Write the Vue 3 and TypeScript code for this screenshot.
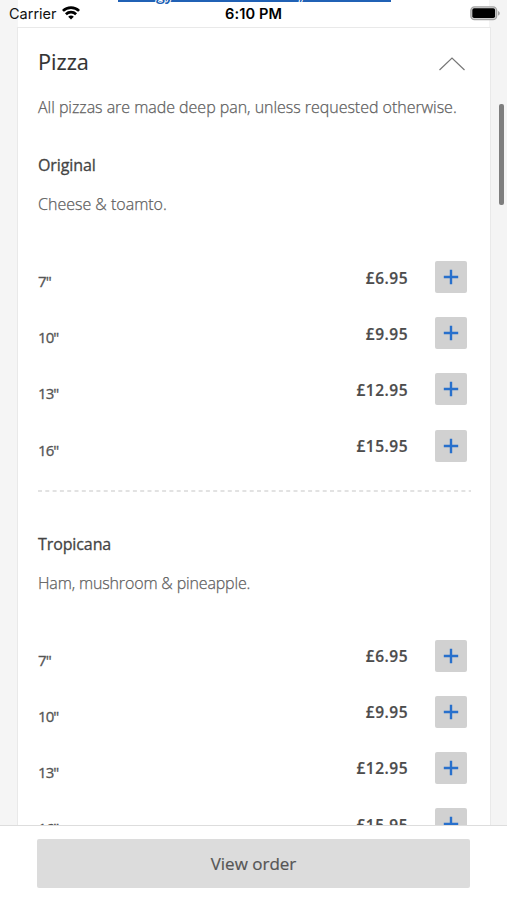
<script setup lang="ts">
interface Option { size: string; price: string }
interface Item { name: string; description: string; options: Option[] }

const options: Option[] = [
  { size: '7"', price: '£6.95' },
  { size: '10"', price: '£9.95' },
  { size: '13"', price: '£12.95' },
  { size: '16"', price: '£15.95' },
]
const items: Item[] = [
  { name: 'Original', description: 'Cheese & toamto.', options },
  { name: 'Tropicana', description: 'Ham, mushroom & pineapple.', options },
]
</script>

<template>
  <div class="screen">
    <div class="link-strip"><span class="link-text">gy</span><span class="link-text comma">,</span></div>
    <header class="status">
      <div class="carrier">
        <span>Carrier</span>
        <svg class="wifi" width="18" height="14" viewBox="0 0 18 14" fill="none" stroke="#000" stroke-width="2.7">
          <path d="M.9 4.9C5.4.4 12.6.4 17.1 4.9" />
          <path d="M3.9 8.3c2.900-2.800 7.300-2.800 10.200 0" />
          <path d="M6.200 10.800c1.600-1.600 4-1.600 5.600 0L9 13.600z" fill="#000" stroke="none" />
        </svg>
      </div>
      <span class="clock">6:10 PM</span>
      <svg class="battery" width="31" height="15" viewBox="0 0 31 15">
        <rect x=".9" y=".9" width="25.7" height="12.6" rx="3.6" fill="#ddd" stroke="#a3a3a3" stroke-width="1.4" />
        <rect x="2.3" y="2.3" width="22.800" height="9.800" rx="1.8" fill="#000" />
        <path d="M28 4.900c2.400.9 2.400 3.800 0 4.700z" fill="#a3a3a3" />
      </svg>
    </header>

    <main class="card">
      <div class="heading">
        <h1>Pizza</h1>
        <svg class="chevron" width="28" height="16" viewBox="0 0 28 16" fill="none" stroke="#777" stroke-width="1.2">
          <path d="M1.500 14 14 2l12.500 12" />
        </svg>
      </div>
      <p class="note">All pizzas are made deep pan, unless requested otherwise.</p>
      <section v-for="item in items" :key="item.name" class="item">
        <h2>{{ item.name }}</h2>
        <p class="description" :class="{ long: item.description.length > 20 }">{{ item.description }}</p>
        <div class="options">
          <div v-for="option in item.options" :key="option.size" class="option">
            <span class="size">{{ option.size }}</span>
            <span class="price">{{ option.price }}</span>
            <button class="add" :aria-label="`Add ${item.name} ${option.size}`">
              <svg width="16" height="16" viewBox="0 0 16 16" stroke="#2870cc" stroke-width="2.4"><path d="M8 .8v14.400M.8 8h14.400" /></svg>
            </button>
          </div>
        </div>
        <svg class="divider" width="433" height="2" viewBox="0 0 433 2"><path d="M0 1h433" stroke="#d9d9d9" stroke-width="1.3" stroke-dasharray="4 3.300" /></svg>
      </section>
    </main>
    <div class="scrollbar"></div>
    <footer class="footer"><button class="order">View order</button></footer>
  </div>
</template>

<style>
body { margin: 0; }
</style>

<style scoped>
.screen {
  position: relative;
  display: flex;
  flex-direction: column;
  width: 507px;
  height: 900px;
  overflow: hidden;
  background: linear-gradient(to right, #f5f5f5 18px, #fff 18px, #fff 489px, #f4f4f4 489px);
  font-family: "Open Sans", "Noto Sans", sans-serif;
  color: #555;
}
h1, h2, p { margin: 0; }
button { padding: 0; border: 0; font: inherit; color: inherit; }
.link-strip {
  position: absolute;
  left: 118px;
  top: 0;
  width: 273px;
  height: 2px;
  background: #2061b5;
}
.link-text {
  position: absolute;
  left: 38px;
  top: -15px;
  font-size: 16px;
  line-height: 18px;
  font-weight: 600;
  color: #2061b5;
  -webkit-text-stroke: 2px #fff;
  paint-order: stroke;
}
.comma { left: 181px; top: -15px; }
.status {
  display: grid;
  grid-template-columns: 1fr auto 1fr;
  align-items: center;
  box-sizing: border-box;
  height: 27px;
  padding: 0 6px 0 9px;
  font: 15px/20px Inter, "Liberation Sans", sans-serif;
  color: #111;
  flex: none;
}
.carrier { display: flex; align-items: center; gap: 5px; font-size: 14.5px; }
.wifi { margin-top: -2px; }
.clock { margin-left: -3px; font-size: 14.600px; font-weight: 600; color: #000; letter-spacing: .1px; }
.battery { justify-self: end; }
.card {
  box-sizing: border-box;
  flex: 1;
  min-height: 0;
  overflow: hidden;
  margin: 0 16px 0 17px;
  padding: 0 20px;
  border: 1px solid #e9e9e9;
  border-bottom: 0;
  background: #fff;
}
.heading {
  display: flex;
  align-items: center;
  justify-content: space-between;
  height: 67px;
}
h1 { margin-top: 0; font-size: 21.700px; line-height: 30px; font-weight: 400; color: #333; -webkit-text-stroke: .15px; }
.chevron { margin: 5px 4px 0 0; }
.note, .description {
  font-size: 16px;
  line-height: 24px;
  font-weight: 300;
  white-space: nowrap;
  color: #606060;
  -webkit-text-stroke: .25px;
}
.item { height: 378.500px; }
.note { height: 46px; letter-spacing: -.03px; }
h2 { padding-top: 12px; font-size: 16px; line-height: 24px; font-weight: 400; color: #444; -webkit-text-stroke: .3px; letter-spacing: -.1px; }
.description { margin-top: 15px; height: 69px; }
.long { letter-spacing: -.15px; }
.options { display: flex; flex-direction: column; gap: 24.200px; }
.option { display: flex; height: 32px; }
.size { flex: 1; padding-top: 8px; font-size: 15px; line-height: 24px; letter-spacing: -.95px; -webkit-text-stroke: .3px; }
.price { width: 80px; padding-top: 4.500px; font-size: 15.500px; line-height: 24px; font-weight: 600; text-align: right; letter-spacing: .5px; color: #4c4c4c; -webkit-text-stroke: .2px; }
.add {
  display: grid;
  place-items: center;
  width: 32px;
  height: 32px;
  margin: 0 3px 0 27px;
  border-radius: 2px;
  background: #d1d1d1;
}
.divider { display: block; margin-top: 28.200px; }
.scrollbar {
  position: absolute;
  left: 499px;
  top: 104px;
  width: 5px;
  height: 101px;
  border-radius: 2px;
  background: #7e7e7e;
}
.footer {
  box-sizing: border-box;
  flex: none;
  height: 75px;
  padding: 13px 37px;
  border-top: 1px solid #ddd;
  background: #fff;
}
.order {
  width: 100%;
  height: 49px;
  border-radius: 2px;
  background: #dcdcdc;
  font-size: 17px;
  -webkit-text-stroke: .2px;
}
</style>
